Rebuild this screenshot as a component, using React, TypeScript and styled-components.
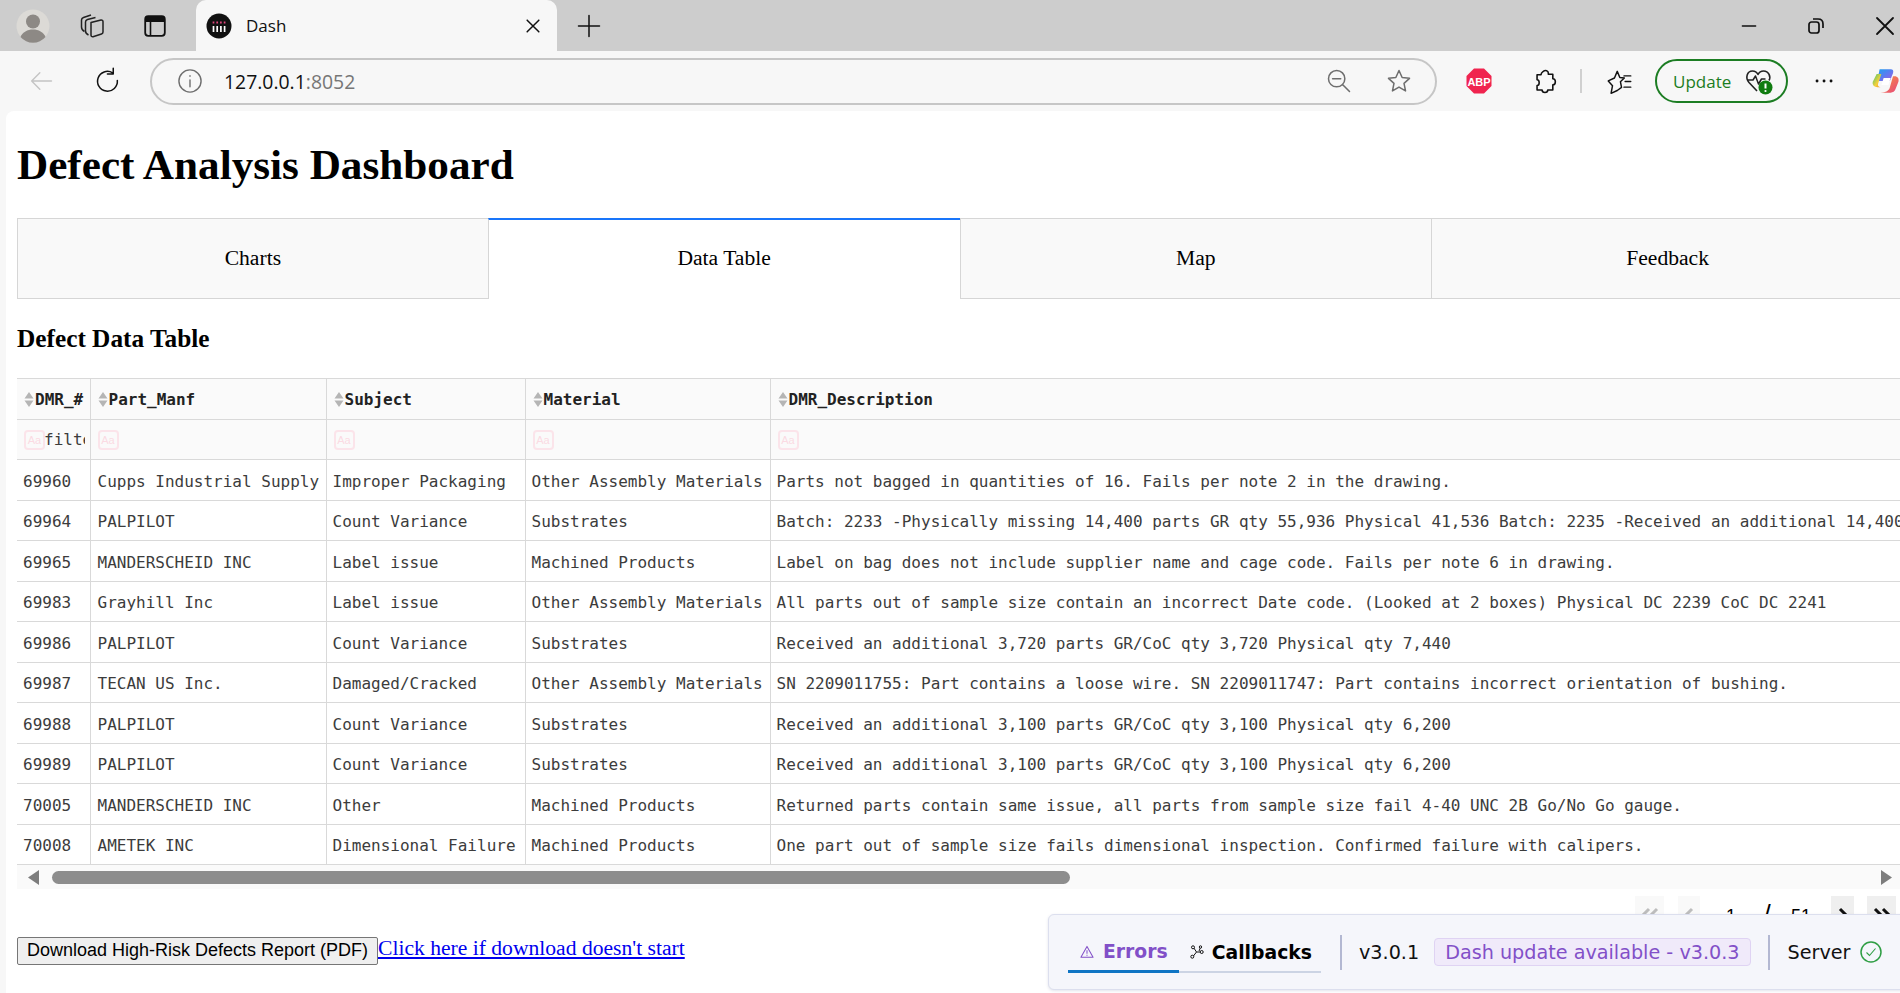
import React from "react";
import styled, { createGlobalStyle } from "styled-components";

const GlobalStyle = createGlobalStyle`
  html, body {
    margin: 0;
    padding: 0;
    height: 100%;
    overflow: hidden;
    background: #f7f7f7;
  }
`;

const Window = styled.div`
  width: 1900px;
  height: 993px;
  display: flex;
  flex-direction: column;
  overflow: hidden;
  background: #f7f7f7;
`;

const TabStrip = styled.div`
  height: 51px;
  flex: none;
  background: #cdcdcd;
  display: flex;
  align-items: center;
`;

const StripIcon = styled.div<{ $w: number }>`
  width: ${(p) => p.$w}px;
  flex: none;
  display: flex;
  justify-content: center;
  align-items: center;
`;

const BrowserTab = styled.div`
  width: 361px;
  height: 51px;
  margin-left: 6px;
  flex: none;
  box-sizing: border-box;
  padding: 0 14px 0 10px;
  background: #f7f7f7;
  border-radius: 10px 10px 0 0;
  display: flex;
  align-items: center;
  gap: 14px;
`;

const TabTitle = styled.span`
  flex: 1;
  font: 17px "Open Sans", sans-serif;
  color: #111;
`;

const WindowButtons = styled.div`
  margin-left: auto;
  display: flex;
  align-items: center;
  gap: 48px;
  padding-right: 3px;
`;

const Toolbar = styled.div`
  height: 60px;
  flex: none;
  background: #f7f7f7;
  display: flex;
  align-items: center;
  padding-left: 27px;
`;

const NavButton = styled.div<{ $ml?: number }>`
  width: 28px;
  height: 28px;
  flex: none;
  margin-left: ${(p) => p.$ml ?? 0}px;
  display: flex;
  align-items: center;
  justify-content: center;
`;

const AddressBar = styled.div`
  width: 1287px;
  height: 47px;
  flex: none;
  margin-left: 28px;
  box-sizing: border-box;
  border: 2px solid #c6c6c6;
  border-radius: 24px;
  display: flex;
  align-items: center;
  padding: 0 22px 0 24px;
`;

const Url = styled.span`
  flex: 1;
  margin-left: 20px;
  font: 19.4px "Open Sans", sans-serif;
  color: #111;
`;

const UrlPort = styled.span`
  color: #767676;
`;

const Separator = styled.div`
  width: 2px;
  height: 24px;
  margin-left: 21px;
  background: #d0d0d0;
  flex: none;
`;

const UpdatePill = styled.div`
  width: 133px;
  height: 44px;
  margin-left: 22px;
  flex: none;
  box-sizing: border-box;
  border: 2px solid #1c7d23;
  border-radius: 22px;
  display: flex;
  align-items: center;
  padding-left: 16px;
  font: 17px "Open Sans", sans-serif;
  color: #1c7d23;
  gap: 14px;
`;

const Page = styled.main`
  flex: 1;
  min-height: 0;
  position: relative;
  margin-left: 6px;
  padding-left: 11px;
  background: #fff;
  border-top-left-radius: 8px;
  overflow: hidden;
  font-family: "Liberation Serif", serif;
  color: #000;
`;

const Title = styled.h1`
  margin: 32px 0 0;
  font-size: 43.2px;
  line-height: 44px;
  font-weight: 700;
  white-space: nowrap;
`;

const DashTabs = styled.div`
  width: 1887px;
  margin-top: 31px;
  display: grid;
  grid-template-columns: repeat(4, 1fr);
`;

const DashTab = styled.div<{ $active?: boolean }>`
  height: 81px;
  box-sizing: border-box;
  display: flex;
  align-items: center;
  justify-content: center;
  padding-bottom: ${(p) => (p.$active ? 3 : 1)}px;
  font-size: 21.6px;
  margin-left: -1px;
  background: ${(p) => (p.$active ? "#fff" : "#f9f9f9")};
  border: 1px solid #d6d6d6;
  border-top: ${(p) => (p.$active ? "2px solid #1975fa" : "1px solid #d6d6d6")};
  border-bottom: ${(p) => (p.$active ? "none" : "1px solid #d6d6d6")};
  &:first-child {
    margin-left: 0;
  }
`;

const SectionTitle = styled.h3`
  margin: 26px 0 0;
  font-size: 25.3px;
  line-height: 26px;
  font-weight: 700;
`;

const TableWrap = styled.div`
  width: 1883px;
  margin-top: 27px;
  overflow: hidden;
`;

const Table = styled.table`
  width: 2600px;
  table-layout: fixed;
  border-collapse: collapse;
  font-family: "DejaVu Sans Mono", monospace;
  font-size: 16px;
  color: #3c3c3c;
`;

const HeadRow = styled.tr`
  height: 41px;
  background: #fafafa;
`;

const FilterRow = styled.tr`
  height: 40px;
  background: #fafafa;
`;

const BodyRow = styled.tr`
  height: 40.5px;
`;

const Th = styled.th`
  padding: 2px 0 0 7px;
  border: 1px solid #d9d9d9;
  text-align: left;
  font-weight: 700;
  color: #222;
  white-space: nowrap;
  overflow: hidden;
  &:first-child {
    border-left: none;
  }
`;

const Td = styled.td`
  padding: 3px 0 0 6px;
  border: 1px solid #d9d9d9;
  white-space: nowrap;
  overflow: hidden;
  &:first-child {
    border-left: none;
  }
  &:nth-child(2) {
    padding-left: 7px;
  }
`;

const HeadLabel = styled.span`
  display: inline-flex;
  align-items: center;
  gap: 1px;
`;

const FilterCell = styled.td`
  padding: 0 0 0 7px;
  border: 1px solid #d9d9d9;
  white-space: nowrap;
  overflow: hidden;
  color: #3c3c3c;
  &:first-child {
    border-left: none;
  }
`;

const FilterInner = styled.div`
  display: flex;
  align-items: center;
`;

const FilterText = styled.span`
  width: 41px;
  margin-left: -1px;
  overflow: hidden;
`;

const CaseBadge = styled.span`
  display: inline-flex;
  width: 21px;
  height: 20px;
  flex: none;
  box-sizing: border-box;
  align-items: center;
  justify-content: center;
  border: 2px solid #fbe4ea;
  border-radius: 4px;
  font: 11px "Liberation Sans", sans-serif;
  color: #fbdbe3;
`;

const Scrollbar = styled.div`
  width: 1883px;
  height: 24px;
  box-sizing: border-box;
  padding: 0 8px 0 11px;
  background: #fafafa;
  display: flex;
  align-items: center;
`;

const Thumb = styled.div`
  width: 1018px;
  height: 13px;
  margin-left: 13px;
  background: #8d8d8d;
  border-radius: 7px;
`;

const ArrowRight = styled.svg`
  margin-left: auto;
`;

const Pagination = styled.div`
  width: 1879px;
  height: 47px;
  box-sizing: border-box;
  padding-top: 7px;
  display: flex;
  justify-content: flex-end;
  font: 18px "Liberation Sans", sans-serif;
`;

const PageButton = styled.div<{ $off?: boolean; $w: number; $ml: number }>`
  width: ${(p) => p.$w}px;
  height: 36px;
  margin-left: ${(p) => p.$ml}px;
  display: flex;
  align-items: center;
  justify-content: center;
  background: ${(p) => (p.$off ? "#f9f9f9" : "#efefef")};
`;

const PageLabel = styled.span<{ $w: number }>`
  width: ${(p) => p.$w}px;
  padding-top: 10px;
  text-align: center;
`;

const PageSlash = styled(PageLabel)`
  padding-top: 3px;
  font-size: 26px;
`;

const DownloadRow = styled.div`
  display: flex;
  align-items: center;
`;

const DownloadButton = styled.button`
  width: 361px;
  height: 28px;
  padding: 0;
  border: 1px solid #767676;
  border-radius: 2px;
  background: #efefef;
  color: #000;
  font: 18px "Liberation Sans", sans-serif;
  white-space: nowrap;
`;

const DownloadLink = styled.a`
  margin-bottom: 4px;
  font-size: 21.6px;
  color: #0000ee;
  text-decoration: underline;
  white-space: nowrap;
`;

const DevTools = styled.div`
  position: absolute;
  left: 1042px;
  top: 803px;
  width: 880px;
  height: 76px;
  box-sizing: border-box;
  padding-left: 19px;
  display: flex;
  align-items: center;
  background: #f5f6fb;
  border: 1px solid #dcdfee;
  border-radius: 6px;
  box-shadow: 0 1px 3px rgba(60, 70, 120, 0.15);
  font-family: "DejaVu Sans", sans-serif;
  font-size: 19.2px;
  color: #111;
`;

const DevTab = styled.div<{ $active?: boolean }>`
  height: 41px;
  box-sizing: border-box;
  display: flex;
  align-items: center;
  gap: ${(p) => (p.$active ? 9 : 8)}px;
  padding: ${(p) => (p.$active ? "2px 11px 0 12px" : "2px 9px 0 11px")};
  font-size: 18.8px;
  font-weight: 700;
  color: ${(p) => (p.$active ? "#8250c8" : "#000")};
  border-bottom: ${(p) => (p.$active ? "3px solid #0f75c4" : "2px solid #ccd4e4")};
`;

const DevDivider = styled.div<{ $ml: number; $mr: number }>`
  width: 2px;
  height: 35px;
  margin: 0 ${(p) => p.$mr}px 0 ${(p) => p.$ml}px;
  background: #b3b8d2;
  flex: none;
`;

const UpdateNote = styled.div`
  height: 26px;
  margin-left: 15px;
  padding: 0 10px;
  display: flex;
  align-items: center;
  background: #f0eafa;
  border: 1px solid #dfd3f3;
  border-radius: 4px;
  color: #8250c8;
  white-space: nowrap;
`;

const ServerStatus = styled.div`
  display: flex;
  align-items: center;
  gap: 10px;
`;

const rows = [
  ["69960", "Cupps Industrial Supply", "Improper Packaging", "Other Assembly Materials", "Parts not bagged in quantities of 16. Fails per note 2 in the drawing."],
  ["69964", "PALPILOT", "Count Variance", "Substrates", "Batch: 2233 -Physically missing 14,400 parts GR qty 55,936 Physical 41,536 Batch: 2235 -Received an additional 14,400 parts"],
  ["69965", "MANDERSCHEID INC", "Label issue", "Machined Products", "Label on bag does not include supplier name and cage code. Fails per note 6 in drawing."],
  ["69983", "Grayhill Inc", "Label issue", "Other Assembly Materials", "All parts out of sample size contain an incorrect Date code. (Looked at 2 boxes) Physical DC 2239 CoC DC 2241"],
  ["69986", "PALPILOT", "Count Variance", "Substrates", "Received an additional 3,720 parts GR/CoC qty 3,720 Physical qty 7,440"],
  ["69987", "TECAN US Inc.", "Damaged/Cracked", "Other Assembly Materials", "SN 2209011755: Part contains a loose wire. SN 2209011747: Part contains incorrect orientation of bushing."],
  ["69988", "PALPILOT", "Count Variance", "Substrates", "Received an additional 3,100 parts GR/CoC qty 3,100 Physical qty 6,200"],
  ["69989", "PALPILOT", "Count Variance", "Substrates", "Received an additional 3,100 parts GR/CoC qty 3,100 Physical qty 6,200"],
  ["70005", "MANDERSCHEID INC", "Other", "Machined Products", "Returned parts contain same issue, all parts from sample size fail 4-40 UNC 2B Go/No Go gauge."],
  ["70008", "AMETEK INC", "Dimensional Failure", "Machined Products", "One part out of sample size fails dimensional inspection. Confirmed failure with calipers."],
];

const columns = ["DMR_#", "Part_Manf", "Subject", "Material", "DMR_Description"];
const widths = [73, 236, 199, 245, 1847];

const SortIcon = () => (
  <svg width="10" height="15" viewBox="0 0 10 15">
    <path d="M5 0 L9.5 6.5 H0.5 Z M5 15 L0.5 8.5 H9.5 Z" fill="#b5b5b5" />
  </svg>
);

const DashIcon = () => (
  <svg width="26" height="26" viewBox="0 0 26 26">
    <circle cx="13" cy="13" r="12.500" fill="#111" />
    <path d="M7.500 13v6M11.200 13v6M14.900 13v6M18.600 13v6" stroke="#fff" strokeWidth="1.700" />
    <path d="M7.500 8.500v2M11.200 8.500v2M14.900 8.500v2M18.600 8.500v2" stroke="#e0447c" strokeWidth="1.700" />
  </svg>
);

const ProfileIcon = () => (
  <svg width="34" height="34" viewBox="0 0 34 34">
    <circle cx="17" cy="17" r="16.500" fill="#dcdad6" />
    <circle cx="17" cy="12.500" r="7" fill="#8d8985" />
    <path d="M4.500 28c2-5 7-7.500 12.500-7.500S27.500 23 29.500 28a16.500 16.500 0 0 1-25 0z" fill="#8d8985" />
  </svg>
);

const CollectionsIcon = () => (
  <svg width="26" height="26" viewBox="0 0 26 26" fill="none" stroke="#222" strokeWidth="1.500" strokeLinejoin="round">
    <path d="M11 9.500l10-2.500c1-.2 2 .5 2 1.500v10.500c0 1-.5 1.700-1.500 2L13 23.800c-1 .2-2-.5-2-1.500z" />
    <path d="M8.500 22C6.500 21 5.500 20 5.500 18V9c0-1 .5-2 2-2.500l8-2" />
    <path d="M4.500 18.500C2.500 17.500 1.500 16 1.500 14V7c0-1 .5-2 2-2.500L11 2" />
  </svg>
);

const TabsPanelIcon = () => (
  <svg width="22" height="22" viewBox="0 0 22 22">
    <rect x="1.200" y="1.200" width="19.600" height="19.600" rx="3" fill="none" stroke="#111" strokeWidth="1.800" />
    <path d="M1.200 4a3 3 0 0 1 3-3h13.600a3 3 0 0 1 3 3v3H1.200z" fill="#111" />
    <path d="M6.500 7v13" stroke="#111" strokeWidth="1.600" />
  </svg>
);

const Glyph = ({ size = 20, color = "#111", width = 1.6, d }: { size?: number; color?: string; width?: number; d: string }) => (
  <svg width={size} height={size} viewBox="0 0 24 24" fill="none" stroke={color} strokeWidth={width} strokeLinecap="round" strokeLinejoin="round">
    <path d={d} />
  </svg>
);

const AbpIcon = () => (
  <svg width="26" height="26" viewBox="0 0 26 26">
    <path d="M8 0.500h10L25.500 8v10L18 25.500H8L0.500 18V8z" fill="#f0244f" />
    <text x="13" y="17.500" textAnchor="middle" fontFamily="Liberation Sans, sans-serif" fontWeight="700" fontSize="11" fill="#fff">ABP</text>
  </svg>
);

const HeartUpdateIcon = () => (
  <svg width="28" height="28" viewBox="0 0 28 28" fill="none">
    <path d="M12 24 L4 15.500C0 11 2 4 7.500 4 10 4 12 5.500 13 7.500 14 5.500 16 4 18.500 4 24 4 26 10 24 13.500" stroke="#222" strokeWidth="1.600" strokeLinejoin="round" />
    <path d="M2 13h6l2.500-4 3 8 3-5h4" stroke="#222" strokeWidth="1.500" strokeLinejoin="round" />
    <circle cx="20.500" cy="20.500" r="7" fill="#107c10" />
    <path d="M20.500 16.500v5" stroke="#fff" strokeWidth="2" />
    <circle cx="20.500" cy="24" r="1.100" fill="#fff" />
  </svg>
);

const CopilotIcon = () => (
  <svg width="36" height="32" viewBox="0 0 36 32">
    <defs>
      <linearGradient id="cpa" x1="0" y1="0" x2="1" y2="1">
        <stop offset="0" stopColor="#1aa3ee" />
        <stop offset="0.500" stopColor="#5b7cf0" />
        <stop offset="1" stopColor="#a65be0" />
      </linearGradient>
      <linearGradient id="cpb" x1="0" y1="0" x2="1" y2="1">
        <stop offset="0" stopColor="#3fc46a" />
        <stop offset="0.600" stopColor="#f6d13c" />
        <stop offset="1" stopColor="#f08a2c" />
      </linearGradient>
      <linearGradient id="cpc" x1="0" y1="0" x2="1" y2="1">
        <stop offset="0" stopColor="#f79a3a" />
        <stop offset="1" stopColor="#e8457c" />
      </linearGradient>
    </defs>
    <path d="M10 1h14c3 0 4 2 3 5l-4 10H8l-2 0 3-11c.5-2 .5-4 1-4z" fill="url(#cpa)" />
    <path d="M6 7h6L8 19c-1 3 0 5 3 5H7c-4 0-7-3-6-7z" fill="url(#cpb)" />
    <path d="M11 31h13c3 0 5-2 6-4l4-10c1-4-1-7-5-7h-2l-4 14c-1 4-5 7-12 7z" fill="url(#cpc)" />
    <path d="M15 12h9l-3 9h-9z" fill="#fff" />
  </svg>
);

const WarnIcon = () => (
  <svg width="14" height="14" viewBox="0 0 15 14" fill="none" stroke="#8250c8" strokeWidth="1.100" strokeLinejoin="round">
    <path d="M7.500 1 L14 12.700H1z" />
    <path d="M7.500 5v4M7.500 10v1" />
  </svg>
);

const CallbackIcon = () => (
  <svg width="14" height="14" viewBox="0 0 14 14" fill="none" stroke="#111" strokeWidth="1">
    <path d="M3.500 2.500L6.500 7M6.500 7L3 11.500M6.500 7h4M10.500 2.500L9 6" />
    <circle cx="3" cy="2.300" r="1.500" fill="#f5f6fb" />
    <circle cx="2.300" cy="11.700" r="1.500" fill="#f5f6fb" />
    <circle cx="11.700" cy="7" r="1.500" fill="#f5f6fb" />
    <circle cx="10.500" cy="2" r="1.200" fill="#f5f6fb" />
  </svg>
);

const ServerOk = () => (
  <svg width="22" height="22" viewBox="0 0 22 22" fill="none" stroke="#2f9e44" strokeWidth="1.500">
    <circle cx="11" cy="11" r="10" />
    <path d="M6.500 11.500l3 3 6-7" strokeWidth="1.100" />
  </svg>
);

const Chevron = ({ double, color }: { double?: boolean; color: string }) => (
  <svg width={double ? 18 : 10} height="14" viewBox={double ? "0 0 18 14" : "0 0 10 14"} fill="none" stroke={color} strokeWidth="3">
    <path d="M2 2l5 5-5 5" />
    {double && <path d="M10 2l5 5-5 5" />}
  </svg>
);

const ChevronLeft = ({ double, color }: { double?: boolean; color: string }) => (
  <svg width={double ? 18 : 10} height="14" viewBox={double ? "0 0 18 14" : "0 0 10 14"} fill="none" stroke={color} strokeWidth="3">
    <path d="M8 2L3 7l5 5" />
    {double && <path d="M16 2l-5 5 5 5" />}
  </svg>
);

export default function App() {
  return (
    <>
      <GlobalStyle />
      <Window>
        <TabStrip>
          <StripIcon $w={66}><ProfileIcon /></StripIcon>
          <StripIcon $w={54}><CollectionsIcon /></StripIcon>
          <StripIcon $w={70}><TabsPanelIcon /></StripIcon>
          <BrowserTab>
            <DashIcon />
            <TabTitle>Dash</TabTitle>
            <Glyph size={20} width={1.8} d="M5 5l14 14M19 5L5 19" />
          </BrowserTab>
          <StripIcon $w={63}><Glyph size={28} width={1.3} d="M12 3v18M3 12h18" /></StripIcon>
          <WindowButtons>
            <Glyph size={20} width={1.6} d="M4 12h16" />
            <svg width="18" height="20" viewBox="0 0 18 20" fill="none" stroke="#111" strokeWidth="1.700">
              <rect x="2" y="6" width="10" height="11" rx="2.500" />
              <path d="M6 3h5c3 0 5 2 5 5v4" />
            </svg>
            <Glyph size={24} width={1.8} d="M4 4l16 16M20 4L4 20" />
          </WindowButtons>
        </TabStrip>
        <Toolbar>
          <NavButton><Glyph size={28} color="#c4c4c4" width={1.2} d="M21 12H4M11 5l-7 7 7 7" /></NavButton>
          <NavButton $ml={39}><Glyph size={28} width={1.3} d="M20 11.500A8.500 8.500 0 1 1 16 5M16.500 1v5h-5" /></NavButton>
          <AddressBar>
            <Glyph size={28} color="#6e6e6e" width={1.2} d="M12 2.500a9.500 9.500 0 1 0 0 19 9.500 9.500 0 0 0 0-19zM12 11v6M12 7.500v.5" />
            <Url>127.0.0.1<UrlPort>:8052</UrlPort></Url>
            <Glyph size={28} color="#6e6e6e" width={1.3} d="M10 3a7 7 0 1 0 0 14 7 7 0 0 0 0-14zM6.500 10h7M15 15l6 6" />
            <NavButton $ml={32}><Glyph size={28} color="#6e6e6e" width={1.3} d="M12 3l2.700 6 6.300.7-4.700 4.300 1.300 6.500L12 17.200 6.400 20.500l1.300-6.500L3 9.700 9.300 9z" /></NavButton>
          </AddressBar>
          <NavButton $ml={28}><AbpIcon /></NavButton>
          <NavButton $ml={38}><Glyph size={27} width={1.4} d="M10 3c2-1.500 4.500-.5 4.500 1.500v1h4v4c3 0 3 5.500 0 5.500v4.500h-4.500c0 3-5 3-5 0H4.500v-4c2.500 0 2.500-5 0-5V6h3.500C8 5 9 3.700 10 3z" /></NavButton>
          <Separator />
          <NavButton $ml={23}><Glyph size={27} width={1.3} d="M10 3l2.300 5.500 4 .4-3.500 3.300 1 5L10 20l-5.500 2.500 1.300-6.800L2 11.500l5.500-2.600zM16 7h6M17 12h5M16 17h6" /></NavButton>
          <UpdatePill>Update<HeartUpdateIcon /></UpdatePill>
          <NavButton $ml={22}><Glyph size={24} width={2.800} d="M5 12h.1M12 12h.1M19 12h.1" /></NavButton>
          <NavButton $ml={34}><CopilotIcon /></NavButton>
        </Toolbar>
        <Page>
          <Title>Defect Analysis Dashboard</Title>
          <DashTabs>
            <DashTab>Charts</DashTab>
            <DashTab $active>Data Table</DashTab>
            <DashTab>Map</DashTab>
            <DashTab>Feedback</DashTab>
          </DashTabs>
          <SectionTitle>Defect Data Table</SectionTitle>
          <TableWrap>
            <Table>
              <colgroup>
                {widths.map((w, i) => (
                  <col key={i} style={{ width: w }} />
                ))}
              </colgroup>
              <thead>
                <HeadRow>
                  {columns.map((c) => (
                    <Th key={c}><HeadLabel><SortIcon />{c}</HeadLabel></Th>
                  ))}
                </HeadRow>
                <FilterRow>
                  {columns.map((c, i) => (
                    <FilterCell key={c}>
                      <FilterInner>
                        <CaseBadge>Aa</CaseBadge>
                        {i === 0 && <FilterText>filter</FilterText>}
                      </FilterInner>
                    </FilterCell>
                  ))}
                </FilterRow>
              </thead>
              <tbody>
                {rows.map((r) => (
                  <BodyRow key={r[0]}>
                    {r.map((v, i) => (
                      <Td key={i}>{v}</Td>
                    ))}
                  </BodyRow>
                ))}
              </tbody>
            </Table>
          </TableWrap>
          <Scrollbar>
            <svg width="11" height="15" viewBox="0 0 11 15"><path d="M0 7.500L11 0v15z" fill="#7d7d7d" /></svg>
            <Thumb />
            <ArrowRight width="11" height="15" viewBox="0 0 11 15"><path d="M11 7.500L0 0v15z" fill="#7d7d7d" /></ArrowRight>
          </Scrollbar>
          <Pagination>
            <PageButton $off $w={29} $ml={0}><ChevronLeft double color="#bdbdbd" /></PageButton>
            <PageButton $off $w={22} $ml={14}><ChevronLeft color="#bdbdbd" /></PageButton>
            <PageLabel $w={62}>1</PageLabel>
            <PageSlash $w={10}>/</PageSlash>
            <PageLabel $w={58}>51</PageLabel>
            <PageButton $w={23} $ml={1}><Chevron color="#111" /></PageButton>
            <PageButton $w={29} $ml={13}><Chevron double color="#111" /></PageButton>
          </Pagination>
          <DownloadRow>
            <DownloadButton>Download High-Risk Defects Report (PDF)</DownloadButton>
            <DownloadLink href="#">Click here if download doesn't start</DownloadLink>
          </DownloadRow>
          <DevTools>
            <DevTab $active><WarnIcon />Errors</DevTab>
            <DevTab><CallbackIcon />Callbacks</DevTab>
            <DevDivider $ml={19} $mr={17} />
            v3.0.1
            <UpdateNote>Dash update available - v3.0.3</UpdateNote>
            <DevDivider $ml={17} $mr={18} />
            <ServerStatus>Server<ServerOk /></ServerStatus>
          </DevTools>
        </Page>
      </Window>
    </>
  );
}
